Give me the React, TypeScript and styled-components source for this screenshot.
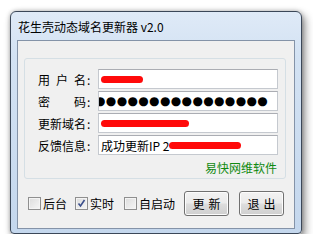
import React from "react";
import styled, { createGlobalStyle } from "styled-components";

const GlobalStyle = createGlobalStyle`
  html, body { margin: 0; padding: 0; background: #ffffff; }
  body { font-family: "Noto Sans CJK SC", "Noto Sans", sans-serif; font-size: 12px; color: #000; }
`;

const Page = styled.div`
  padding: 11px 0 0 10px;
`;

const Window = styled.div`
  width: 292px;
  height: 223px;
  box-sizing: border-box;
  border: 1px solid #3b4758;
  border-radius: 6px 6px 4px 4px;
  background: linear-gradient(180deg, #dfeaf7 0%, #d3e2f3 20%, #c4d7ed 100%);
  box-shadow: 3px 4px 9px rgba(0, 0, 0, 0.45), 0 0 4px rgba(0, 0, 0, 0.25);
  display: flex;
  flex-direction: column;
  padding: 0 6px 4px 6px;
`;

const TitleBar = styled.div`
  height: 28px;
  display: flex;
  align-items: center;
  padding-left: 1px;
  font-size: 12px;
  color: #000;
  white-space: nowrap;
`;

const Client = styled.div`
  flex: 1;
  border: 1px solid #8493a8;
  background: #f0f0f0;
  padding: 17px 8px 0 6px;
  display: flex;
  flex-direction: column;
`;

const GroupBox = styled.div`
  height: 121px;
  box-sizing: border-box;
  border: 1px solid #d5dfe5;
  border-radius: 3px;
  padding: 10px 7px 0 13px;
  display: flex;
  flex-direction: column;
`;

const Form = styled.div`
  display: grid;
  grid-template-columns: 60px 1fr;
  grid-auto-rows: 20px;
  row-gap: 2px;
`;

const LabelCell = styled.div`
  display: flex;
  align-items: center;
  font-size: 12px;
  white-space: nowrap;
`;

const LabelText = styled.span`
  display: inline-block;
  width: 48px;
  text-align: justify;
  text-align-last: justify;
`;

const Colon = styled.span`
  margin-left: 1px;
`;

const Field = styled.div`
  box-sizing: border-box;
  height: 20px;
  border: 1px solid #c5c9cf;
  border-top-color: #abadb3;
  background: #ffffff;
  display: flex;
  align-items: center;
  padding-left: 2px;
  overflow: hidden;
  white-space: nowrap;
  font-size: 12px;
`;

const Redact = styled.span<{ $w: number }>`
  display: inline-block;
  width: ${(p) => p.$w}px;
  height: 7px;
  border-radius: 4px;
  background: #ff0a0a;
  flex-shrink: 0;
`;

const Dots = styled.span`
  font-family: "DejaVu Sans", sans-serif;
  font-size: 12px;
  letter-spacing: 0.35px;
  margin-left: -6px;
`;

const Brand = styled.div`
  margin-top: 6px;
  text-align: right;
  color: #118a11;
  font-size: 12px;
  line-height: 14px;
  padding-right: 1px;
`;

const BottomRow = styled.div`
  margin-top: 12px;
  height: 25px;
  display: flex;
  align-items: center;
  padding-left: 4px;
`;

const CheckItem = styled.label<{ $gap: number }>`
  display: flex;
  align-items: center;
  gap: 2px;
  margin-right: ${(p) => p.$gap}px;
  font-size: 12px;
  white-space: nowrap;
`;

const Box = styled.span`
  width: 13px;
  height: 13px;
  box-sizing: border-box;
  border: 1px solid #8f8f8f;
  background: linear-gradient(135deg, #dcdcdc 0%, #f6f6f6 100%);
  box-shadow: inset 0 0 0 1px #f4f4f4;
  display: flex;
  align-items: center;
  justify-content: center;
`;

const Buttons = styled.div`
  margin-left: auto;
  margin-right: 2px;
  display: flex;
  gap: 10px;
`;

const Button = styled.button`
  width: 45px;
  height: 25px;
  box-sizing: border-box;
  border: 1px solid #707070;
  border-radius: 3px;
  background: linear-gradient(180deg, #f2f2f2 0%, #ebebeb 48%, #dddddd 52%, #cfcfcf 100%);
  box-shadow: inset 0 0 0 1px #fcfcfc;
  font-family: "Noto Sans CJK SC", sans-serif;
  font-size: 12px;
  color: #000;
  padding: 0;
  letter-spacing: 4px;
  text-indent: 4px;
`;

const Check: React.FC<{ checked?: boolean }> = ({ checked }) => (
  <Box>
    {checked && (
      <svg width="9" height="9" viewBox="0 0 9 9">
        <path d="M1.5 4.5 L3.5 7 L7.5 1" fill="none" stroke="#3b4f8c" strokeWidth="1.6" />
      </svg>
    )}
  </Box>
);

export default function App() {
  return (
    <>
      <GlobalStyle />
      <Page>
        <Window>
          <TitleBar>花生壳动态域名更新器 v2.0</TitleBar>
          <Client>
            <GroupBox>
              <Form>
                <LabelCell>
                  <LabelText>用户名</LabelText>
                  <Colon>:</Colon>
                </LabelCell>
                <Field>
                  <Redact $w={42} />
                </Field>
                <LabelCell>
                  <LabelText>密码</LabelText>
                  <Colon>:</Colon>
                </LabelCell>
                <Field>
                  <Dots>●●●●●●●●●●●●●●●●</Dots>
                </Field>
                <LabelCell>
                  <LabelText>更新域名</LabelText>
                  <Colon>:</Colon>
                </LabelCell>
                <Field>
                  <Redact $w={88} />
                </Field>
                <LabelCell>
                  <LabelText>反馈信息</LabelText>
                  <Colon>:</Colon>
                </LabelCell>
                <Field>
                  成功更新IP 2<Redact $w={72} />
                </Field>
              </Form>
              <Brand>易快网维软件</Brand>
            </GroupBox>
            <BottomRow>
              <CheckItem $gap={8}>
                <Check />
                后台
              </CheckItem>
              <CheckItem $gap={10}>
                <Check checked />
                实时
              </CheckItem>
              <CheckItem $gap={0}>
                <Check />
                自启动
              </CheckItem>
              <Buttons>
                <Button>更新</Button>
                <Button>退出</Button>
              </Buttons>
            </BottomRow>
          </Client>
        </Window>
      </Page>
    </>
  );
}
